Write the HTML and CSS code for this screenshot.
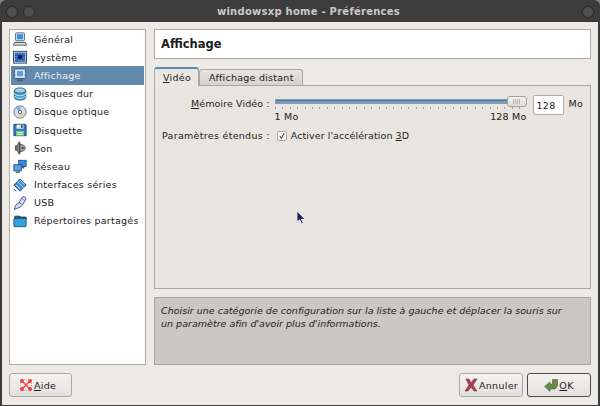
FILE: index.html
```html
<!DOCTYPE html>
<html lang="fr">
<head>
<meta charset="utf-8">
<title>windowsxp home - Préférences</title>
<link rel="stylesheet" href="styles.css">
</head>
<body>
<div class="window">
  <div class="titlebar">
    <div class="dots"><span class="dot"></span><span class="dot"></span></div>
    <div class="title">windowsxp home - Préférences</div>
    <div class="dots"><span class="dot"></span></div>
  </div>
  <div class="content">
    <div class="main">
      <ul class="list">
        <li class="item"><svg class="ico" viewBox="0 0 16 16"><rect x="3" y="1" width="10" height="9" rx="1" fill="#e8eef6" stroke="#33506f"/><rect x="4.500" y="2.500" width="7" height="6" fill="#3f8fe0"/><path d="M1.500 12h13l1 3h-15z" fill="#e4e4dc" stroke="#44474a"/></svg><span>Général</span></li>
        <li class="item"><svg class="ico" viewBox="0 0 16 16"><rect x=".5" y="1.500" width="15" height="13.500" fill="#d6dce6" stroke="#2a3a55"/><rect x="2" y="3" width="12" height="10.500" fill="#1f5fc0"/><rect x="6" y="6" width="4" height="4" fill="#10141c"/><path d="M3 4.500h1M6 4.500h1M9 4.500h1M12 4.500h1M3 7.500h1M3 10.500h1M12 8.500h1M12 11.500h1M6 12h1M9 12h1" stroke="#b9d4f5"/></svg><span>Système</span></li>
        <li class="item sel"><svg class="ico" viewBox="0 0 16 16"><rect x="1.500" y="1" width="13" height="11" rx="1" fill="#c8d8ea" stroke="#33506f"/><rect x="4" y="3" width="8" height="7" fill="#5d9bd8" stroke="#e4eef8"/><path d="M4.500 14h7" stroke="#46586c" stroke-width="2"/></svg><span>Affichage</span></li>
        <li class="item"><svg class="ico" viewBox="0 0 16 16"><path d="M1.500 4v8c0 1.500 3 3 6.500 3s6.500-1.500 6.500-3V4z" fill="#3f9fc8" stroke="#2f5f80"/><ellipse cx="8" cy="4" rx="6.500" ry="3" fill="#9fd0ea" stroke="#2f5f80"/><path d="M1.500 7c1 2 3.500 3 6.500 3s5.500-1 6.500-3M1.500 10c1 2 3.500 3 6.500 3s5.500-1 6.500-3" fill="none" stroke="#d4ecf6"/></svg><span>Disques dur</span></li>
        <li class="item"><svg class="ico" viewBox="0 0 16 16"><circle cx="8" cy="8" r="7" fill="#d8dcec" stroke="#5a6478"/><path d="M8 8L3 4a6 6 0 0 1 6-2z" fill="#8ab4e8"/><path d="M8 8l5 4a6 6 0 0 1-6 2z" fill="#e8d880"/><circle cx="8" cy="8" r="2" fill="#fff" stroke="#4a5468"/></svg><span>Disque optique</span></li>
        <li class="item"><svg class="ico" viewBox="0 0 16 16"><path d="M1 1.500h13l1 1v12H1z" fill="#2f78c8" stroke="#1f3f68"/><rect x="4" y="2" width="8" height="4.500" fill="#e4ecf4"/><rect x="9" y="2.500" width="2" height="3" fill="#23466f"/><rect x="3.500" y="9" width="9" height="5.500" fill="#7cd07c"/><path d="M5 11h6M5 13h6" stroke="#e8f8e8"/></svg><span>Disquette</span></li>
        <li class="item"><svg class="ico" viewBox="0 0 16 16"><path d="M6.500 1.500L5 5.500H3v5h2l1.500 4h1.500v-13z" fill="#8d9192" stroke="#33383c"/><path d="M8 4c3 0 6 1.500 6 4s-3 4-6 4z" fill="#b4b8b8" stroke="#33383c"/><circle cx="11" cy="8" r="1.300" fill="#2c3034"/><path d="M4 7h2M4 9h2" stroke="#33383c" stroke-width=".7"/></svg><span>Son</span></li>
        <li class="item"><svg class="ico" viewBox="0 0 16 16"><rect x="6.500" y="1.500" width="8.500" height="7" fill="#3b8bdc" stroke="#1f4f88"/><rect x="1" y="6.500" width="8.500" height="7" fill="#5aa0e4" stroke="#1f4f88"/><path d="M3 15h5" stroke="#33506f" stroke-width="1.500"/><path d="M10 10h3" stroke="#33506f" stroke-width="1.500"/></svg><span>Réseau</span></li>
        <li class="item"><svg class="ico" viewBox="0 0 16 16"><path d="M8 1l7 7-7 7-7-7z" fill="#3f8fd4" stroke="#1f4570"/><path d="M5 4l7 7M3.500 8l5 5M8 2.500l5 5" stroke="#d4e8f8"/><path d="M1 13l3 2" stroke="#1f4570"/></svg><span>Interfaces séries</span></li>
        <li class="item"><svg class="ico" viewBox="0 0 16 16"><path d="M1.500 15.500l1-4 2-2.500 2-1 3.500-6a2.500 2.500 0 0 1 4.500 2.500l-3.500 5.500-3 3-3 1z" fill="#cfd8ee" stroke="#3c4a88"/><path d="M9.500 9.500L7 7.500" stroke="#3c4a88"/><path d="M10.500 3l3 2" stroke="#8090c8"/></svg><span>USB</span></li>
        <li class="item"><svg class="ico" viewBox="0 0 16 16"><path d="M2 2.500h6l1 1h6v3H2z" fill="#245a80" stroke="#1f3f58"/><rect x="1" y="5" width="14" height="9.500" rx="1" fill="#35a0e0" stroke="#1f4f70"/></svg><span>Répertoires partagés</span></li>
      </ul>
      <div class="right">
        <div class="header">Affichage</div>
        <div class="tabs">
          <div class="tabbar">
            <div class="tab active"><span><u>V</u>idéo</span></div>
            <div class="tab">Affichage distant</div>
          </div>
          <div class="panel">
            <div class="memrow">
              <label class="lbl"><u>M</u>émoire Vidéo :</label>
              <div class="slider">
                <div class="track"><div class="fill"></div><div class="thumb"><i></i></div></div>
                <div class="ticks"></div>
                <div class="scale"><span>1 Mo</span><span>128 Mo</span></div>
              </div>
              <div class="spin">128</div>
              <span class="unit">Mo</span>
            </div>
            <div class="extrow">
              <label class="lbl">Paramètres étendus :</label>
              <span class="check"><svg viewBox="0 0 9 9"><path d="M2 4.500l1.800 2.500 3-5.500" fill="none" stroke="#444" stroke-width="1.200"/></svg></span>
              <span class="acc">Activer l'accélération <u>3</u>D</span>
            </div>
            <svg class="cursor" viewBox="0 0 12 16"><path d="M1 1v12l3-2.500 2 4.500 2-1-2-4h4z" fill="#1c2260" stroke="#f4f4f4" stroke-width="1"/></svg>
          </div>
        </div>
        <div class="desc"><em>Choisir une catégorie de configuration sur la liste à gauche et déplacer la souris sur<br>un paramètre afin d'avoir plus d'informations.</em></div>
      </div>
    </div>
    <div class="footer">
      <button class="btn help"><svg class="bico" viewBox="0 0 14 14"><path d="M3 3l8 8M11 3l-8 8" stroke="#ee5050" stroke-width="1.500"/><path d="M5 1.500h4M5 12.500h4M1.500 5v4M12.500 5v4" stroke="#e8a0a0" stroke-dasharray="1 1"/><circle cx="3" cy="3" r="2" fill="#ee3c3c"/><circle cx="11" cy="3" r="2" fill="#ee3c3c"/><circle cx="3" cy="11" r="2" fill="#ee3c3c"/><circle cx="11" cy="11" r="2" fill="#ee3c3c"/></svg><span><u>A</u>ide</span></button>
      <div class="spacer"></div>
      <button class="btn cancel"><svg class="bico" viewBox="0 0 14 14"><path d="M2 1h3l2 4 3-4h3l-4 6 4 6h-3l-3-4-3 4H1l4-6z" fill="#a8404f" stroke="#70303c" stroke-width=".6"/></svg><span>Annuler</span></button>
      <button class="btn ok"><svg class="bico" viewBox="0 0 14 14"><path d="M.5 8.500L6 4v2h2.500V1.500h5V8L11 11H6v2.500z" fill="#6b8a4a" stroke="#4c6634" stroke-width=".6"/></svg><span><u>O</u>K</span></button>
    </div>
  </div>
</div>
</body>
</html>
```
FILE: styles.css
```css
* { box-sizing: border-box; }
html, body { margin: 0; padding: 0; }
body {
  width: 600px;
  height: 406px;
  overflow: hidden;
  background: #8a8886;
  font-family: "DejaVu Sans", sans-serif;
  font-size: 9.5px;
  color: #1c1c1c;
}
.window {
  width: 600px;
  height: 406px;
  display: flex;
  flex-direction: column;
  border-radius: 6px 6px 0 0;
  background: #3c3c3c;
  padding: 0 2px 1px;
}
.titlebar {
  height: 22px;
  flex: none;
  display: flex;
  align-items: center;
  justify-content: space-between;
  padding: 0 4px;
}
.dots { display: flex; gap: 5px; width: 29px; margin-top: 2px; }
.dots:last-child { justify-content: flex-end; }
.dot {
  width: 12px;
  height: 12px;
  border-radius: 50%;
  background: #4e4e4e;
  border: 1px solid #2a2a2a;
}
.title {
  color: #c9c9c9;
  font-weight: bold;
  font-size: 10px;
  letter-spacing: 0.25px;
  margin-left: 17px;
}
.content {
  flex: 1;
  min-height: 0;
  display: flex;
  flex-direction: column;
  background: #edeae6;
  padding: 7px 7px 8px;
}
.main { flex: 1; display: flex; gap: 8px; min-height: 0; }
.list {
  list-style: none;
  margin: 0;
  width: 137px;
  flex: none;
  background: #fff;
  border: 1px solid #aeaca9;
  padding: 0 1px;
}
.item {
  height: 18.200px;
  display: flex;
  align-items: center;
  gap: 7px;
  padding-left: 2px;
  letter-spacing: 0.25px;
}
.item.sel { background: #6189ad; color: #e9eef3; }
.ico { width: 14px; height: 14px; flex: none; }
.right { flex: 1; min-width: 0; display: flex; flex-direction: column; }
.header {
  height: 30px;
  flex: none;
  background: #fff;
  border: 1px solid #aeaca9;
  display: flex;
  align-items: center;
  padding-left: 6px;
  font-weight: bold;
  font-size: 11.500px;
}
.tabs { flex: 1; display: flex; flex-direction: column; margin-top: 8px; }
.tabbar { height: 18px; display: flex; flex: none; position: relative; z-index: 1; }
.tab {
  height: 16px;
  margin-top: 2px;
  padding: 0 8px 0 9px;
  display: flex;
  align-items: center;
  background: linear-gradient(#e8e5e1, #d6d3ce);
  border: 1px solid #a9a7a4;
  border-bottom: none;
  border-radius: 3px 3px 0 0;
  letter-spacing: 0.25px;
}
.tab.active {
  width: 45px;
  height: 19px;
  margin-top: 0;
  padding: 0 0 1px 8px;
  background: #eae7e3;
  border-top: 2px solid #5e89af;
  letter-spacing: 0.3px;
  color: #222;
}
.panel {
  flex: 1;
  position: relative;
  background: #e8e5e1;
  border: 1px solid #a9a7a4;
  padding: 8px 7px;
  letter-spacing: 0.3px;
}
.memrow { display: flex; align-items: flex-start; }
.memrow .lbl { width: 108px; text-align: right; padding-top: 4px; letter-spacing: 0.1px; }
.slider { width: 253px; margin-left: 5px; position: relative; letter-spacing: 0.2px; }
.track {
  height: 5px;
  margin-top: 5px;
  background: #aab0b6;
  border: 1px solid #8c9aa8;
  position: relative;
}
.fill { position: absolute; inset: 0; background: #6d9bc4; border-top: 1px solid #55799c; }
.thumb {
  position: absolute;
  right: -1px;
  top: -4px;
  width: 20px;
  height: 11px;
  border: 1px solid #a3a19e;
  border-radius: 3px;
  background: linear-gradient(#f6f5f3, #dcd9d5);
  display: flex;
  align-items: center;
  justify-content: center;
}
.thumb i {
  width: 7px;
  height: 5px;
  background: repeating-linear-gradient(90deg, #b4b2af 0 1px, transparent 1px 2px);
}
.ticks {
  height: 2px;
  margin-top: 3px;
  background: repeating-linear-gradient(90deg, #9a9a9a 0 1px, transparent 1px 7.400px);
}
.scale { display: flex; justify-content: space-between; margin-top: 2px; line-height: 11px; }
.spin {
  width: 32px;
  height: 20px;
  margin-left: 6px;
  margin-top: 1px;
  background: #fff;
  border: 1px solid #aeaca9;
  border-radius: 2px;
  display: flex;
  align-items: center;
  padding-left: 3px;
}
.unit { margin-left: 4px; padding-top: 4px; }
.extrow { display: flex; align-items: center; margin-top: 8px; }
.extrow .lbl { margin-right: 7px; }
.check {
  width: 10px;
  height: 10px;
  margin-right: 4px;
  background: #f8f7f5;
  border: 1px solid #a9a7a4;
  border-radius: 2px;
  display: flex;
}
.check svg { width: 8px; height: 8px; }
.acc { letter-spacing: 0.07px; }
.cursor { position: absolute; left: 141px; top: 124px; width: 11px; height: 15px; }
.desc {
  height: 68px;
  flex: none;
  margin-top: 8px;
  background: #cac7c4;
  border: 1px solid #a9a7a4;
  padding: 6px;
  line-height: 13px;
  letter-spacing: 0.02px;
}
.footer { height: 32px; flex: none; display: flex; align-items: flex-end; gap: 4px; }
.spacer { flex: 1; }
.btn {
  height: 24px;
  display: flex;
  align-items: center;
  justify-content: center;
  gap: 1px;
  margin: 0;
  padding: 0;
  font: inherit;
  letter-spacing: 0.3px;
  color: #1c1c1c;
  background: linear-gradient(#f5f3f1, #e3e0dc);
  border: 1px solid #aaa8a5;
  border-radius: 3px;
}
.help { width: 63px; justify-content: flex-start; padding-left: 9px; }
.cancel { width: 64px; }
.ok { width: 64px; border-color: #4a4a4a; }
.bico { width: 14px; height: 14px; flex: none; }
```
